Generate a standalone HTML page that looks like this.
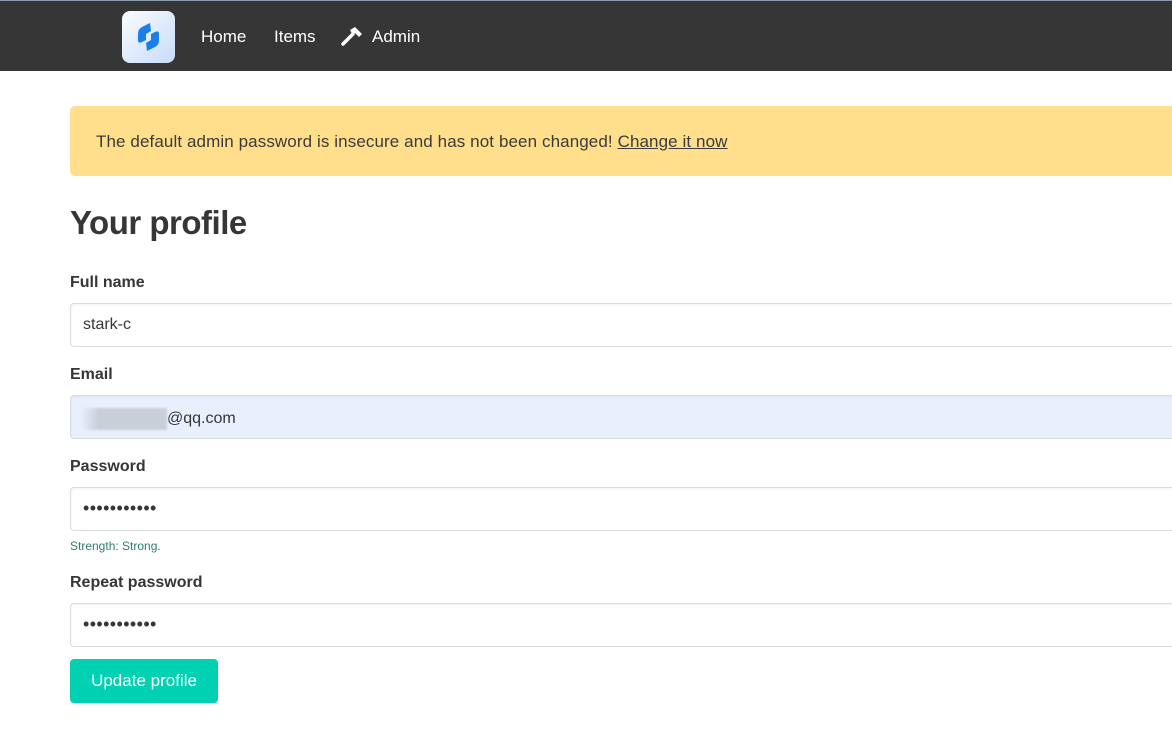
<!DOCTYPE html>
<html><head><meta charset="utf-8"><style>
*{box-sizing:border-box;margin:0;padding:0}
body{width:1172px;height:753px;overflow:hidden;background:#fff;font-family:"Liberation Sans",sans-serif;color:#363636;position:relative}
.nav{position:absolute;left:0;top:0;width:1172px;height:71px;background:#363636;border-top:1px solid #8a9bb0}
.logo{position:absolute;left:122px;top:10px;width:53px;height:52px;border-radius:8px;background:linear-gradient(135deg,#fafcff,#c6dcf8)}
.nl{position:absolute;top:26px;color:#fff;font-size:17px}
.warn{position:absolute;left:70px;top:106px;width:1110px;height:70px;background:#ffdf8b;border-radius:5px;font-size:17px;padding:26px 0 0 26px;color:#3b3b3b;letter-spacing:0.1px}
.warn u{color:#3b3b3b}
h1{position:absolute;left:70px;top:204px;font-size:33px;font-weight:bold;color:#363636;letter-spacing:-0.5px}
.lab{position:absolute;left:70px;font-size:16px;font-weight:bold;color:#363636}
.inp{position:absolute;left:70px;width:1110px;height:44px;border:1px solid #dbdbdb;border-radius:4px;font-size:16px;padding:12px 12px;color:#363636;box-shadow:inset 0 1px 2px rgba(10,10,10,.05)}
.dots{font-size:18px;letter-spacing:0.4px;padding-top:10px}
.btn{position:absolute;left:70px;top:659px;width:148px;height:44px;background:#00d1b2;border-radius:4px;color:#fff;font-size:17px;text-align:center;line-height:44px}
</style></head><body>
<div class="nav">
<div class="logo"><svg width="53" height="52" viewBox="0 0 53 52"><path d="M28 12 L20 16 Q16 18 16 23 L16 29 Q16 33 20 31 L24 29 L24 23 L29 20 Z" fill="#1a7fe8"/><path d="M25 40 L33 36 Q37 34 37 29 L37 23 Q37 19 33 21 L29 23 L29 29 L24 32 Z" fill="#1a7fe8"/></svg></div>
<div class="nl" style="left:201px">Home</div>
<div class="nl" style="left:274px">Items</div>
<svg style="position:absolute;left:341px;top:24px" width="22" height="22" viewBox="0 0 22 22"><path d="M2 19 L12 9" stroke="#fff" stroke-width="3.5" stroke-linecap="round"/><path d="M9 5 L14 2 L21 9 L18 12 L14 8 L11 9 Z" fill="#fff"/></svg>
<div class="nl" style="left:372px">Admin</div>
</div>
<div class="warn">The default admin password is insecure and has not been changed! <u>Change it now</u></div>
<h1>Your profile</h1>
<div class="lab" style="top:274px">Full name</div>
<div class="inp" style="top:303px">stark-c</div>
<div class="lab" style="top:366px">Email</div>
<div class="inp" style="top:395px;background:#e8f0fe"><span style="display:inline-block;width:86px;height:22px;background:linear-gradient(90deg,#e8f0fe,#c9ced8 20%,#c9ced8);vertical-align:middle;margin-left:-2px;filter:blur(1px)"></span>@qq.com</div>
<div class="lab" style="top:458px">Password</div>
<div class="inp dots" style="top:487px">•••••••••••</div>
<div style="position:absolute;left:70px;top:539px;font-size:12px;color:#2e7d6f">Strength: Strong.</div>
<div class="lab" style="top:574px">Repeat password</div>
<div class="inp dots" style="top:603px">•••••••••••</div>
<div class="btn">Update profile</div>
</body></html>
